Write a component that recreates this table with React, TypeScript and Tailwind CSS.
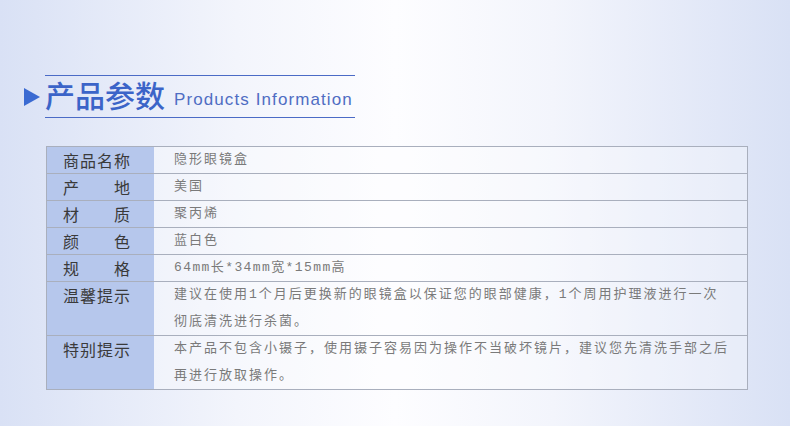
import React from "react";

const rows = [
  { label: "商品名称", value: ["隐形眼镜盒"] },
  { label: "产地", value: ["美国"] },
  { label: "材质", value: ["聚丙烯"] },
  { label: "颜色", value: ["蓝白色"] },
  { label: "规格", value: ["64mm长*34mm宽*15mm高"], tight: true },
  {
    label: "温馨提示",
    value: ["建议在使用1个月后更换新的眼镜盒以保证您的眼部健康，1个周用护理液进行一次", "彻底清洗进行杀菌。"],
  },
  {
    label: "特别提示",
    value: ["本产品不包含小镊子，使用镊子容易因为操作不当破坏镜片，建议您先清洗手部之后", "再进行放取操作。"],
  },
];

const cjk = { fontFamily: '"Noto Sans CJK SC", "Noto Sans", sans-serif' };
const mono = { fontFamily: '"Liberation Mono", "Noto Sans CJK SC", monospace' };

export default function App() {
  return (
    <div className="h-[426px] w-full overflow-hidden bg-[linear-gradient(to_right,#d9e1f5_0%,#f3f5fc_30%,#fdfdff_50%,#f3f5fc_70%,#d9e1f5_100%)]">
      {/* Title */}
      <div className="flex items-center pl-[24px] pt-[75px]">
        <svg width="16" height="18" viewBox="0 0 16 18" className="mr-[5px] mt-[1px]">
          <polygon points="0,0 16,9 0,18" fill="#3a6ad2" />
        </svg>
        <div className="flex h-[43px] w-[310px] items-center border-y border-[#4b6bc6]">
          <span className="mb-[6px] text-[30px] font-medium leading-none text-[#3b64c8]" style={cjk}>
            产品参数
          </span>
          <span
            className="ml-[9px] mt-[6px] text-[17px] leading-none tracking-[1.1px] text-[#4f6dc3]"
            style={{ fontFamily: '"Liberation Sans", Arial, sans-serif' }}
          >
            Products Information
          </span>
        </div>
      </div>

      {/* Spec table */}
      <div className="ml-[46px] mt-[28px] w-[702px] border border-[#a9afbd] divide-y divide-[#a9afbd]">
        {rows.map((row) => (
          <div key={row.label} className="flex">
            <div
              className="w-[107px] shrink-0 bg-[#b6c7ec] pl-[16px] text-[16px] leading-[26px] text-[#3a3a3a]"
              style={cjk}
            >
              {row.label.length === 2 ? (
                <div className="flex w-[67px] justify-between">
                  <span>{row.label[0]}</span>
                  <span>{row.label[1]}</span>
                </div>
              ) : (
                <span className="tracking-[1px]">{row.label}</span>
              )}
            </div>
            <div
              className={
                "flex-1 bg-white/30 pl-[20px] text-[13px] text-[#7a7a7a] whitespace-nowrap " +
                (row.tight ? "tracking-[1.4px] " : "tracking-[2px] ") +
                (row.value.length > 1 ? "leading-[26.5px]" : "leading-[26px]")
              }
              style={mono}
            >
              {row.value.map((line) => (
                <div key={line}>{line}</div>
              ))}
            </div>
          </div>
        ))}
      </div>
    </div>
  );
}
